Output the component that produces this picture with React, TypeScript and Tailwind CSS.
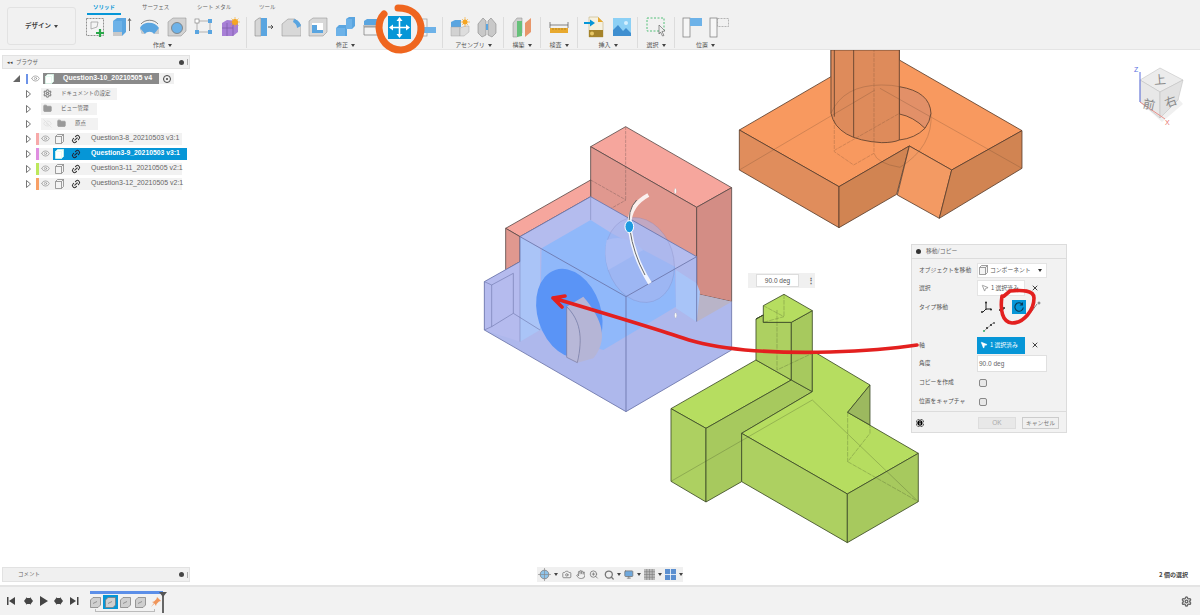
import { Hand, Search, ZoomIn, Monitor, Camera, Settings, Eye, EyeOff, Link2, Folder, MousePointer2, X, Info } from 'lucide-react';
import type { ReactNode } from 'react';

const Caret = () => <span className="ml-[3px] inline-block border-x-[2px] border-t-[3px] border-x-transparent border-t-[#444] align-middle" />;

function Sep({ className }: { className: string }) {
  return <div className={`mt-[2px] h-[31px] w-px bg-[#dcdcdc] ${className}`} />;
}

function Group({ label, gap, children }: { label: string; gap: string; children: ReactNode }) {
  return (
    <div className="flex flex-col items-center">
      <div className={`flex h-[24px] items-center ${gap}`}>{children}</div>
      <div className="mt-[2px] whitespace-nowrap text-[6px] leading-[8px] text-[#555]">
        {label}
        <Caret />
      </div>
    </div>
  );
}

function Ico({ children, w = 20 }: { children: ReactNode; w?: number }) {
  return (
    <svg width={w} height="22" viewBox={`0 0 ${w} 22`} fill="none" className="shrink-0">
      {children}
    </svg>
  );
}

const tabs = [
  { t: 'ソリッド', w: 'w-[34px]', on: true },
  { t: 'サーフェス', w: 'w-[25px] ml-[21px]', on: false },
  { t: 'シート メタル', w: 'w-[34px] ml-[30px]', on: false },
  { t: 'ツール', w: 'w-[15px] ml-[28px]', on: false },
];

function Toolbar() {
  return (
    <div className="flex h-[50px] shrink-0 border-b border-[#e4e4e4] bg-[#f1f1f1] pl-[7px] pt-[4px]">
      <div className="mt-[3px] flex h-[38px] w-[69px] items-center justify-center rounded-[3px] border border-[#e2e2e2] text-[6.5px] font-bold text-[#444]">
        デザイン
        <Caret />
      </div>
      <div className="ml-[9px]">
        <div className="flex h-[11px] pl-[2px]">
          {tabs.map((t) => (
            <div key={t.t} className={`${t.w} h-[11px] whitespace-nowrap text-center text-[5.5px] leading-[6px] ${t.on ? 'border-b-[2px] border-[#0696d7] font-bold text-[#0696d7]' : 'text-[#666]'}`}>
              {t.t}
            </div>
          ))}
        </div>
        <div className="flex">
          <Group label="作成" gap="gap-[7px]">
            <Ico>
              <rect x="1.5" y="2.5" width="17" height="17" stroke="#666" strokeWidth=".7" strokeDasharray="2 1" fill="#f4f4f4" />
              <path d="M6 6h7l-1 5-6 2z" stroke="#888" strokeWidth=".6" />
              <path d="M15 13v8M11 17h8" stroke="#2aa84a" strokeWidth="2.200" />
            </Ico>
            <Ico>
              <path d="M1 5l4-3h9v14l-4 4H1z" fill="#5aa5e0" />
              <path d="M1 5h9v15H1z" fill="#6db2e8" />
              <path d="M1 16h9v4H1z" fill="#c9c9c9" />
              <path d="M17.500 3v12M16 5l1.500-2.500L19 5" stroke="#444" strokeWidth=".7" />
            </Ico>
            <Ico w={21}>
              <path d="M1 12c3-7 15-7 19 0l-2 6h-3c-2-3-7-3-9 0H3z" fill="#5aa5e0" />
              <path d="M15 18l5-6v6zM1 12l2 6h3z" fill="#ccc" />
              <path d="M2 8c4-5 13-5 17 0" stroke="#555" strokeWidth=".7" />
            </Ico>
            <Ico>
              <path d="M1 6l5-4h13v13l-5 5H1z" fill="#d2d2d2" stroke="#888" strokeWidth=".5" />
              <circle cx="10" cy="12" r="5.500" fill="#6db2e8" stroke="#777" strokeWidth=".8" />
            </Ico>
            <Ico w={19}>
              <path d="M4 5h11M4 16h11M3 7v7M16 7v7" stroke="#888" strokeWidth=".6" />
              <rect x="1" y="3" width="4" height="4" fill="#fff" stroke="#777" strokeWidth=".6" />
              <rect x="14" y="3" width="4" height="4" fill="#5aa5e0" />
              <rect x="1" y="14" width="4" height="4" fill="#5aa5e0" />
              <rect x="14" y="14" width="4" height="4" fill="#5aa5e0" />
            </Ico>
            <Ico>
              <path d="M2 7l5-3 11 1v11l-5 4H2z" fill="#a77fd6" />
              <path d="M2 12h11M7 7v13M13 7v13" stroke="#7d5aa8" strokeWidth=".7" />
              <circle cx="15" cy="6" r="3" fill="#f5a623" />
              <path d="M15 1v10M10 6h10M11.500 2.500l7 7M18.500 2.500l-7 7" stroke="#f5a623" strokeWidth=".6" />
            </Ico>
          </Group>
          <Sep className="ml-[6px] mr-[7px]" />
          <Group label="修正" gap="gap-[7px]">
            <Ico>
              <path d="M1 5l4-3h2v18H1z" fill="#d6d6d6" stroke="#777" strokeWidth=".5" />
              <path d="M7 2h6v18H7z" fill="#5aa5e0" />
              <path d="M14 11h5M17 9l2 2-2 2" stroke="#333" strokeWidth=".8" />
            </Ico>
            <Ico>
              <path d="M1 8l6-5h7l6 6v11H1z" fill="#d8d8d8" stroke="#888" strokeWidth=".5" />
              <path d="M13 3c4 1 6 3 7 7l-4 2c0-3-2-5-4-6z" fill="#5aa5e0" />
            </Ico>
            <Ico>
              <path d="M1 5l4-3h14v14l-4 4H1z" fill="#d8d8d8" stroke="#888" strokeWidth=".5" />
              <path d="M4 7h11v10H4z" fill="#fff" />
              <path d="M4 9h5v5h6v3H4z" fill="#5aa5e0" />
            </Ico>
            <Ico>
              <path d="M1 12l3-3h7V3l3-2h6v9l-3 3h-5v7H1z" fill="#5aa5e0" />
              <path d="M1 12h9v8H1zM11 3h6v10h-6z" fill="#6db2e8" />
            </Ico>
            <Ico>
              <path d="M2 5l3-2h14v4l-3 2H2z" fill="#5aa5e0" />
              <path d="M2 11h15v8H2z" fill="#f2f2f2" stroke="#777" strokeWidth=".7" />
              <path d="M1 10h18" stroke="#555" strokeWidth=".6" />
            </Ico>
            <svg width="23" height="23" viewBox="0 0 23 23" className="-mx-[1px] shrink-0">
              <rect width="23" height="23" fill="#0696d7" />
              <path d="M11.500 3v17M3 11.500h17" stroke="#fff" strokeWidth="1.600" />
              <path d="M11.500 1l3 4h-6zM11.500 22l3-4h-6zM1 11.500l4-3v6zM22 11.500l-4-3v6z" fill="#fff" />
            </svg>
            <Ico>
              <rect x="1" y="3" width="9" height="17" fill="none" stroke="#999" strokeWidth=".7" />
              <rect x="3" y="11" width="16" height="6" fill="#6db2e8" />
            </Ico>
          </Group>
          <Sep className="ml-[5px] mr-[7px]" />
          <Group label="アセンブリ" gap="gap-[7px]">
            <Ico>
              <path d="M1 6l4-2h6v7H1z" fill="#5aa5e0" />
              <path d="M1 11h9v9H1z" fill="#d2d2d2" stroke="#999" strokeWidth=".4" />
              <path d="M10 12l5-2h4v6l-5 4h-4z" fill="#ddd" stroke="#999" strokeWidth=".4" />
              <circle cx="15" cy="6" r="2.500" fill="#f5a623" />
              <path d="M15 1v10M10 6h10M12 3l6 6M18 3l-6 6" stroke="#f5a623" strokeWidth=".6" />
            </Ico>
            <Ico>
              <path d="M1 8l5-6 3 3v14l-4 2-4-4z" fill="#c9c9c9" stroke="#777" strokeWidth=".5" />
              <path d="M19 8l-5-6-3 3v14l4 2 4-4z" fill="#c9c9c9" stroke="#777" strokeWidth=".5" />
              <path d="M9 8l2 0v6H9z" fill="#5aa5e0" />
            </Ico>
          </Group>
          <Sep className="ml-[6px] mr-[8px]" />
          <Group label="構築" gap="gap-0">
            <Ico>
              <path d="M1 7l4-5h5v15l-5 4H1z" fill="#d0d0d0" stroke="#888" strokeWidth=".5" />
              <path d="M5 5h5v15l-5 1z" fill="#66c07a" />
              <path d="M13 7l6-5v14l-6 5z" fill="#e8966a" />
            </Ico>
          </Group>
          <Sep className="ml-[8px] mr-[8px]" />
          <Group label="検査" gap="gap-0">
            <Ico>
              <path d="M1 6v6M19 6v6M1 9h18" stroke="#555" strokeWidth=".7" />
              <rect x="1" y="12" width="18" height="5" fill="#e8a92e" />
              <path d="M4 12v2M7 12v2M10 12v2M13 12v2M16 12v2" stroke="#8a6410" strokeWidth=".5" />
            </Ico>
          </Group>
          <Sep className="ml-[8px] mr-[6px]" />
          <Group label="挿入" gap="gap-[8px]">
            <Ico>
              <path d="M5 1h9l5 5v15H5z" fill="#f6f1e0" stroke="#b9a66a" strokeWidth=".5" />
              <path d="M14 1l5 5h-5z" fill="#e8a92e" />
              <rect x="5" y="14" width="14" height="7" fill="#a5832a" />
              <circle cx="8" cy="17.500" r="2" fill="#e8c766" />
              <path d="M0 7h7" stroke="#0696d7" strokeWidth="2" />
              <path d="M6 3.500l5 3.500-5 3.500z" fill="#0696d7" />
            </Ico>
            <Ico>
              <rect x="1" y="2" width="18" height="18" fill="#8cd0f5" />
              <circle cx="14" cy="7" r="2" fill="#d5f0ff" />
              <path d="M1 20v-6l5-5 5 6 3-3 5 5v3z" fill="#3f8fd0" />
            </Ico>
          </Group>
          <Sep className="ml-[5px] mr-[8px]" />
          <Group label="選択" gap="gap-0">
            <Ico>
              <rect x="1" y="2" width="17" height="13" stroke="#55c07a" strokeWidth="1" strokeDasharray="2 1.500" />
              <path d="M13 9l6 6-3 .5 2 4-1.500.5-2-4-1.500 2z" fill="#eee" stroke="#555" strokeWidth=".6" />
            </Ico>
          </Group>
          <Sep className="ml-[8px] mr-[7px]" />
          <Group label="位置" gap="gap-[7px]">
            <Ico>
              <rect x="1" y="2" width="7" height="19" fill="#f6f6f6" stroke="#777" strokeWidth=".7" />
              <rect x="8" y="2" width="12" height="8" fill="#6db2e8" />
            </Ico>
            <Ico>
              <rect x="1" y="2" width="7" height="19" fill="#f6f6f6" stroke="#777" strokeWidth=".7" />
              <rect x="8.500" y="2.500" width="11" height="8" stroke="#999" strokeWidth=".7" strokeDasharray="2 1" />
            </Ico>
          </Group>
        </div>
      </div>
    </div>
  );
}

function Scene() {
  const blueLine = '#6a74a8';
  return (
    <svg className="absolute inset-0" width="1200" height="535" viewBox="0 50 1200 535" fill="none">
      {/* orange part */}
      <g transform="translate(730 50) scale(.3333)" stroke="#5b3f2c" strokeWidth="2.500" strokeLinejoin="round">
        <polygon points="28,240 303,80 303,0 508,0 508,30 876,242 665,360 538,288 327,410" fill="#f8995f" />
        <polygon points="28,240 327,410 327,533 28,360" fill="#e08d5c" />
        <polygon points="327,410 538,288 500,433 327,533" fill="#d18452" />
        <polygon points="538,288 665,360 628,505 502,435" fill="#f39a63" />
        <polygon points="665,360 876,242 876,355 628,505" fill="#d18452" />
        <path d="M508,110 Q600,125 603,190 Q600,215 585,235 Q550,200 508,192Z" fill="#e29068" />
        <path d="M303,0 L303,190 Q320,270 455,278 Q490,278 508,270 L508,0Z" fill="#de8b5b" />
        <path d="M371,0V262M313,0V200M508,270Q555,265 585,235" />
        <g opacity=".35" strokeWidth="2">
          <path d="M28,360 L435,120 M450,115 L876,355 M303,190 Q340,105 455,105 Q490,105 508,110" />
          <path d="M313,210V305L371,345L432,310V0M505,192L315,300" strokeDasharray="12 3" />
          <path d="M603,190 Q610,290 510,352 Q440,340 432,310" />
        </g>
      </g>
      {/* red + blue part */}
      <g transform="translate(470 120) scale(.3333)" strokeLinejoin="round">
        <g stroke="#5c4a48" strokeWidth="2.500">
          <polygon points="362,80 467,20 785,203 680,262" fill="#f6a69d" />
          <polygon points="362,80 680,262 680,522 362,340" fill="#e0988f" />
          <polygon points="680,262 785,203 785,545 680,522" fill="#d38d85" />
          <polygon points="107,325 362,180 362,230 150,350" fill="#f6a69d" />
          <polygon points="107,325 150,350 150,425 107,450" fill="#e0988f" />
          <path d="M467,20V240M362,180L468,240L362,300" opacity=".4" strokeDasharray="10 3" />
        </g>
        <polygon points="43,485 150,425 150,350 362,230 680,410 680,522 785,545 785,690 468,875 43,630" fill="#aeb8ec" />
        <polygon points="150,350 362,230 680,410 468,530" fill="#b4bcee" />
        <polygon points="43,485 150,425 150,665 43,630" fill="#b5bbee" />
        <polygon points="680,522 785,545 680,605" fill="#b9b4c8" />
        <polygon points="150,350 210,385 210,630 150,665" fill="#aac4f7" />
        <polygon points="215,385 362,300 425,340 520,390 615,440 618,560 400,690 210,630" fill="#90b8fa" />
        <polygon points="618,450 680,490 690,515 680,605 618,565" fill="#a8c4f8" />
        <ellipse cx="510" cy="420" rx="100" ry="130" transform="rotate(-18 510 420)" fill="#a8b4ec" fillOpacity=".55" stroke="#7a7ab0" strokeOpacity=".35" strokeWidth="2" />
        <path d="M410,360 Q400,410 415,450 L520,390 Q470,340 410,360Z" fill="#aabcf4" />
        <ellipse cx="298" cy="580" rx="95" ry="137" transform="rotate(-18 298 580)" fill="#5a94f6" />
        <path d="M340,530 C400,600 415,660 370,715 L322,728 C340,650 330,600 290,560Z" fill="#b5b5d6" />
        <path d="M290,560 C330,600 340,650 322,728 L290,712Z" fill="#b8b8d8" stroke="#77779a" strokeWidth="2" />
        <g stroke={blueLine} strokeWidth="2.500">
          <path d="M43,485V630L468,875L785,690V545M468,530V875M150,350L468,530L680,410V605M150,350V425L43,485M150,350L362,230L680,410" />
          <path d="M65,495L130,460V580L65,620ZM43,485L65,495M43,630L65,620M130,580L210,630" opacity=".7" />
          <path d="M150,425V665M362,230V300" opacity=".5" />
        </g>
        <path d="M535,225 Q470,260 480,330 Q490,410 540,490" stroke="#fff" strokeWidth="12" opacity=".85" />
        <path d="M500,240 Q470,270 480,330 Q490,400 525,465" stroke="#666" strokeWidth="3" />
        <ellipse cx="478" cy="320" rx="13" ry="18" fill="#1e9be0" stroke="#fff" strokeWidth="3" />
        <ellipse cx="616" cy="213" rx="3" ry="8" fill="#fff" stroke="#aaa" />
        <ellipse cx="617" cy="586" rx="3" ry="8" fill="#fff" stroke="#aaa" />
      </g>
      {/* green part */}
      <g transform="translate(660 290) scale(.3333)" stroke="#3c4a26" strokeWidth="2.500" strokeLinejoin="round">
        <polygon points="33,356 288,210 394,270 138,415" fill="#b6dd60" />
        <polygon points="33,356 138,415 138,636 33,574" fill="#add061" />
        <polygon points="138,415 394,270 457,305 245,430 245,575 138,636" fill="#a7c95e" />
        <polygon points="288,87 310,75 310,97 394,97 394,270 288,210" fill="#add061" />
        <polygon points="394,97 457,62 457,305 394,270" fill="#a7c95e" />
        <polygon points="310,47 372,13 457,62 394,97 310,97 310,75 288,87 310,75" fill="#b6dd60" />
        <polygon points="245,430 457,305 457,190 470,190 630,285 563,367 775,490 562,612" fill="#b6dd60" />
        <polygon points="563,367 630,285 630,405" fill="#9cb95f" />
        <polygon points="245,430 562,612 562,758 245,575" fill="#add061" />
        <polygon points="562,612 775,490 775,635 562,758" fill="#a7c95e" />
        <g opacity=".4" strokeWidth="2">
          <path d="M33,574L457,330L775,635" />
          <path d="M351,60V240L457,190M563,367V515L630,430V405M563,515L775,635M372,13V80M310,47L372,80L310,97" strokeDasharray="14 3" />
        </g>
      </g>
      {/* view cube */}
      <polygon points="1143,105 1162,122 1183,104 1175,95" fill="#e6e6e6" opacity=".6" />
      <polygon points="1160,68 1183,80 1160,92 1140,80" fill="#ececec" stroke="#bbb" strokeWidth=".5" />
      <polygon points="1140,80 1160,92 1160,118 1140,102" fill="#e8e8e8" stroke="#bbb" strokeWidth=".5" />
      <polygon points="1160,92 1183,80 1178,100 1160,118" fill="#e2e2e2" stroke="#bbb" strokeWidth=".5" />
      <path d="M1140,72V102" stroke="#5a6fe0" strokeWidth="1" />
      <path d="M1140,102L1165,119" stroke="#e8908a" strokeWidth="1" />
      <text x="1134" y="72" fontSize="7" fill="#5a6fe0" fontFamily="Liberation Sans">Z</text>
      <text x="1165" y="125" fontSize="7" fill="#e8706a" fontFamily="Liberation Sans">X</text>
      <text x="1154" y="84" fontSize="12" fill="#888" transform="rotate(-5 1160 80)">上</text>
      <text x="1144" y="109" fontSize="12" fill="#888" transform="rotate(12 1150 100)">前</text>
      <text x="1164" y="106" fontSize="12" fill="#888" transform="rotate(-20 1170 100)">右</text>
    </svg>
  );
}

function BoxIco({ light }: { light?: boolean }) {
  return (
    <svg width="9" height="10" viewBox="0 0 9 10" fill={light ? '#fff' : '#f4f4f4'} stroke={light ? '#dfe' : '#777'} strokeWidth=".7" className="shrink-0">
      <path d="M.5 2.500l2-2h6v7l-2 2h-6z" />
      <path d="M.5 2.500h6v7M6.500 2.500l2-2" />
    </svg>
  );
}

const Tri = () => (
  <svg width="5" height="8" viewBox="0 0 5 8" fill="#fff" stroke="#555" strokeWidth=".8" className="mr-[5px] shrink-0">
    <path d="M.5.5l4 3.500-4 3.500z" />
  </svg>
);

const comps = [
  { bar: 'bg-[#f7a9a9]', t: 'Question3-8_20210503 v3:1' },
  { bar: 'bg-[#df8ee0]', t: 'Question3-9_20210503 v3:1', sel: true },
  { bar: 'bg-[#bde85c]', t: 'Question3-11_20210505 v2:1' },
  { bar: 'bg-[#f8a066]', t: 'Question3-12_20210505 v2:1' },
];

function Browser() {
  return (
    <div className="absolute bottom-[3px] left-[2px] top-[5px] flex w-[188px] flex-col justify-between">
      <div>
        <div className="flex h-[14px] items-center border border-[#e2e2e2] bg-[#f0f0f0] pl-[4px] pr-[1px] text-[5.5px] text-[#666]">
          <span className="mr-[3px] text-[5px] text-[#444]">◂◂</span>
          ブラウザ
          <span className="ml-auto h-[5px] w-[5px] rounded-full bg-[#444]" />
          <span className="ml-[3px] h-[6px] w-px bg-[#aaa]" />
        </div>
        <div className="mt-[2px] flex flex-col font-['Liberation_Sans',sans-serif] text-[7px] text-[#666]">
          <div className="flex h-[15px] items-center pl-[11px]">
            <span className="mr-[6px] h-0 w-0 border-b-[7px] border-l-[7px] border-b-[#666] border-l-transparent" />
            <span className="mr-[3px] h-[10px] w-[2px] bg-[#6d93e8]" />
            <Eye className="mr-[3px] h-[9px] w-[9px] text-[#999]" />
            <div className="flex h-[11px] w-[116px] items-center bg-[#8a8a8a] pl-[2px] font-bold text-white">
              <BoxIco light />
              <span className="ml-[9px] whitespace-nowrap">Question3-10_20210505 v4</span>
            </div>
            <div className="flex h-[11px] w-[15px] items-center justify-center bg-[#f0f0f0]">
              <span className="flex h-[8px] w-[8px] items-center justify-center rounded-full border border-[#444]">
                <span className="h-[2px] w-[2px] rounded-full bg-[#444]" />
              </span>
            </div>
          </div>
          <div className="flex h-[15px] items-center pl-[24px]">
            <Tri />
            <div className="ml-[5px] flex h-[12px] w-[76px] items-center bg-[#f2f2f2] pl-[2px] font-['Noto_Sans_CJK_JP',sans-serif] text-[5.5px]">
              <Settings className="mr-[9px] h-[9px] w-[9px] text-[#888]" strokeWidth={3} />
              ドキュメントの設定
            </div>
          </div>
          <div className="flex h-[15px] items-center pl-[24px]">
            <Tri />
            <div className="ml-[5px] flex h-[12px] w-[56px] items-center bg-[#f2f2f2] pl-[2px] font-['Noto_Sans_CJK_JP',sans-serif] text-[5.5px]">
              <Folder className="mr-[9px] h-[9px] w-[9px] fill-[#999] text-[#999]" />
              ビュー管理
            </div>
          </div>
          <div className="flex h-[15px] items-center pl-[24px]">
            <Tri />
            <div className="ml-[5px] flex h-[12px] w-[57px] items-center bg-[#f2f2f2] pl-[2px] font-['Noto_Sans_CJK_JP',sans-serif] text-[5.5px]">
              <EyeOff className="mr-[5px] h-[9px] w-[9px] text-[#ddd]" />
              <Folder className="mr-[9px] h-[9px] w-[9px] fill-[#999] text-[#999]" />
              原点
            </div>
          </div>
          {comps.map((c) => (
            <div key={c.t} className="flex h-[15px] items-center pl-[24px]">
              <Tri />
              <span className={`h-[12px] w-[3px] ${c.bar}`} />
              <div className="flex h-[12px] w-[143px] items-center bg-[#f2f2f2] pl-[2px]">
                <Eye className="h-[9px] w-[9px] shrink-0 text-[#999]" />
                <div className={`ml-[3px] flex h-[12px] shrink-0 items-center pl-[2px] ${c.sel ? 'w-[134px] bg-[#0696d7] text-[6.8px] font-bold text-white' : ''}`}>
                  <BoxIco light={c.sel} />
                  <Link2 className={`ml-[7px] mr-[10px] h-[10px] w-[10px] shrink-0 -rotate-45 ${c.sel ? 'text-[#223]' : 'text-[#333]'}`} strokeWidth={2.500} />
                  <span className="whitespace-nowrap">{c.t}</span>
                </div>
              </div>
            </div>
          ))}
        </div>
      </div>
      <div className="flex h-[15px] items-center border border-[#e2e2e2] bg-[#f0f0f0] pl-[15px] pr-[1px] text-[5.5px] text-[#666]">
        コメント
        <span className="ml-auto h-[5px] w-[5px] rounded-full bg-[#444]" />
        <span className="ml-[3px] h-[6px] w-px bg-[#aaa]" />
      </div>
    </div>
  );
}

function Row({ label, h, children }: { label: string; h: string; children: ReactNode }) {
  return (
    <div className={`flex items-center ${h}`}>
      <div className="w-[58px] shrink-0 whitespace-nowrap text-[5.8px] text-[#555]">{label}</div>
      {children}
    </div>
  );
}

function Dialog() {
  return (
    <div className="absolute left-[911px] top-[194px] flex h-[189px] w-[156px] flex-col border border-[#dcdcdc] bg-[#f2f2f2]">
      <div className="flex h-[14px] shrink-0 items-center border-b border-[#dcdcdc] pl-[4px] text-[5.8px] text-[#666]">
        <span className="mr-[5px] h-[5px] w-[5px] rounded-full bg-[#333]" />
        移動/コピー
      </div>
      <div className="flex-1 pl-[7px] pt-[2px]">
        <Row label="オブジェクトを移動" h="h-[18px]">
          <div className="flex h-[15px] w-[70px] items-center border border-[#e4e4e4] bg-white pl-[1px] text-[5.8px] text-[#555]">
            <BoxIco />
            <span className="ml-[2px]">コンポーネント</span>
            <span className="ml-auto mr-[4px] border-x-[2px] border-t-[3px] border-x-transparent border-t-[#333]" />
          </div>
        </Row>
        <Row label="選択" h="h-[18px]">
          <div className="flex h-[16px] w-[48px] items-center border border-[#e4e4e4] bg-white pl-[3px] text-[5.8px] text-[#555]">
            <MousePointer2 className="mr-[2px] h-[8px] w-[8px] text-[#777]" />1 選択済み
          </div>
          <X className="ml-[6px] h-[8px] w-[8px] text-[#444]" strokeWidth={3} />
        </Row>
        <Row label="タイプ移動" h="h-[20px]">
          <svg width="68" height="14" viewBox="0 0 68 14" fill="none" className="shrink-0">
            <path d="M9 3v7M9 9l-3 3M9 9h5" stroke="#222" />
            <circle cx="9" cy="2.500" r="1" fill="#222" /><circle cx="5" cy="12" r="1" fill="#222" /><circle cx="14" cy="9.500" r="1" fill="#222" />
            <circle cx="23" cy="10" r="1" fill="#222" /><path d="M24 9h3" stroke="#222" /><circle cx="27" cy="8" r="1" fill="#222" />
            <rect x="35" y="0" width="14" height="14" fill="#0696d7" />
            <path d="M45.500 4.500a4.200 4.200 0 1 0 .8 3" stroke="#0b3a55" strokeWidth="1.100" />
            <path d="M46 2v3.500h-3.500z" fill="#0b3a55" />
            <path d="M55 11l5-7" stroke="#555" strokeWidth=".7" /><circle cx="62" cy="3" r="1" fill="none" stroke="#333" strokeWidth=".6" />
          </svg>
        </Row>
        <div className="flex h-[19px] items-center pl-[63px]">
          <svg width="14" height="12" viewBox="0 0 14 12" fill="none">
            <path d="M2 10l9-8" stroke="#777" strokeWidth=".7" />
            <circle cx="5" cy="7" r="1" fill="#222" /><circle cx="9" cy="4" r="1" fill="#222" /><circle cx="2" cy="10" r="1" fill="#3a6" /><circle cx="12" cy="2" r="1" fill="#555" />
          </svg>
        </div>
        <Row label="軸" h="h-[18px]">
          <div className="flex h-[17px] w-[48px] items-center bg-[#0696d7] pl-[3px] text-[5.8px] text-white">
            <MousePointer2 className="mr-[2px] h-[8px] w-[8px] fill-white" />1 選択済み
          </div>
          <X className="ml-[6px] h-[8px] w-[8px] text-[#444]" strokeWidth={3} />
        </Row>
        <Row label="角度" h="h-[19px]">
          <div className="flex h-[17px] w-[70px] items-center border border-[#e0e0e0] bg-white pl-[1px] font-['Liberation_Sans',sans-serif] text-[6.5px] text-[#666]">90.0 deg</div>
        </Row>
        <Row label="コピーを作成" h="h-[19px]">
          <span className="ml-[2px] h-[8px] w-[8px] rounded-[2px] border border-[#888] bg-[#e8e8e8]" />
        </Row>
        <Row label="位置をキャプチャ" h="h-[19px]">
          <span className="ml-[2px] h-[8px] w-[8px] rounded-[2px] border border-[#888] bg-[#e8e8e8]" />
        </Row>
      </div>
      <div className="flex h-[23px] shrink-0 items-center border-t border-[#dcdcdc] pl-[4px]">
        <Info className="h-[8px] w-[8px] rounded-full bg-black text-white" strokeWidth={3} />
        <div className="ml-[54px] flex h-[12px] w-[38px] items-center justify-center border border-[#ddd] bg-[#e8e8e8] font-['Liberation_Sans',sans-serif] text-[6.5px] text-[#aaa]">OK</div>
        <div className="ml-[6px] flex h-[12px] w-[37px] items-center justify-center border border-[#ccc] bg-[#f0f0f0] text-[5.8px] text-[#777]">キャンセル</div>
      </div>
    </div>
  );
}

function NavBar() {
  return (
    <div className="absolute bottom-[3px] left-[537px] flex h-[15px] w-[146px] items-center bg-[#f0f0f0] pl-[1px] text-[#777]">
      <svg width="13" height="13" viewBox="0 0 12 12" fill="none" className="shrink-0">
        <circle cx="6" cy="6" r="4" fill="#8fc4ea" stroke="#777" strokeWidth=".7" />
        <path d="M6 0v12M0 6h12" stroke="#888" strokeWidth=".6" />
      </svg>
      <Caret />
      <Camera className="ml-[4px] h-[11px] w-[11px]" />
      <Hand className="ml-[4px] h-[11px] w-[11px]" />
      <ZoomIn className="ml-[4px] h-[11px] w-[11px]" />
      <Search className="ml-[5px] h-[12px] w-[12px]" strokeWidth={3} />
      <Caret />
      <Monitor className="ml-[3px] h-[11px] w-[11px] fill-[#6fa8dc]" />
      <Caret />
      <svg width="11" height="11" viewBox="0 0 10 10" className="ml-[3px] shrink-0">
        <rect width="10" height="10" fill="#bbb" />
        <path d="M2.500 0v10M5 0v10M7.500 0v10M0 2.500h10M0 5h10M0 7.500h10" stroke="#777" strokeWidth=".5" />
      </svg>
      <Caret />
      <svg width="11" height="11" viewBox="0 0 10 10" className="ml-[3px] shrink-0">
        <rect width="10" height="10" fill="#5b8fd0" />
        <path d="M5 0v10M0 5h10" stroke="#fff" strokeWidth=".7" />
      </svg>
      <Caret />
    </div>
  );
}

function TimelineBox({ sel }: { sel?: boolean }) {
  return (
    <div className={`flex h-[14px] w-[15px] items-center justify-center ${sel ? 'bg-[#0696d7]' : ''}`}>
      <svg width="11" height="11" viewBox="0 0 11 11" fill="#cfcfcf" stroke="#777" strokeWidth=".7">
        <path d="M.5 3l2.500-2.500h7.500v7.500L8 10.500H.5z" />
        <path d="M3 6.500l4-2" />
      </svg>
    </div>
  );
}

function Timeline() {
  return (
    <div className="flex h-[30px] shrink-0 items-center border-t-[2px] border-[#e4e4e4] bg-[#f2f2f2] pl-[7px] pr-[8px]">
      <svg width="72" height="10" viewBox="0 0 72 10" fill="#444" className="shrink-0">
        <path d="M0 1h1.500v8H0zM8 1v8L2 5zM17 5l3-4v8zM20 2h3v6h-3zM23 1l3 4-3 4zM33 0l8 5-8 5zM47 5l3-4v8zM50 2h3v6h-3zM53 1l3 4-3 4zM63 1l6 4-6 4zM70 1h1.500v8H70z" />
      </svg>
      <div className="relative ml-[9px] h-[26px] w-[80px]">
        <div className="ml-[2px] mt-[3px] h-[3px] w-[73px] bg-[#5c8fe8]" />
        <div className="mt-[1px] flex items-center">
          <TimelineBox />
          <TimelineBox sel />
          <TimelineBox />
          <TimelineBox />
          <svg width="10" height="10" viewBox="0 0 10 10" fill="#f0955a" className="ml-[3px]">
            <path d="M6 0l4 4-2 .5L5.500 7 5 9 3.500 6.500 0 10l3-4L1 5l2-.5L5.500 2z" />
          </svg>
        </div>
        <div className="ml-[7px] h-[3px] w-[60px] border-x border-b border-[#bbb]" />
        <div className="absolute left-[74px] top-[5px] h-[20px] w-[2px] bg-[#666]" />
        <div className="absolute left-[71px] top-[4px] border-x-[4px] border-t-[5px] border-x-transparent border-t-[#555]" />
      </div>
      <Settings className="ml-auto h-[11px] w-[11px] text-[#666]" strokeWidth={3} />
    </div>
  );
}

export default function App() {
  return (
    <div className="relative flex h-[615px] w-[1200px] flex-col overflow-hidden bg-white font-['Noto_Sans_CJK_JP','Liberation_Sans',sans-serif]">
      <Toolbar />
      <div className="relative flex-1 bg-white">
        <Scene />
        <Browser />
        <div className="absolute left-[748px] top-[223px] flex h-[15px] w-[67px] items-center bg-[#f0f0f0] pl-[8px] font-['Liberation_Sans',sans-serif] text-[6.5px] text-[#555]">
          <div className="flex h-[13px] w-[44px] items-center justify-center border border-[#ddd] bg-white">90.0 deg</div>
          <div className="ml-[8px] text-[8px] font-bold leading-none text-[#666]">⋮</div>
        </div>
        <Dialog />
        <NavBar />
        <div className="absolute bottom-[6px] right-[12px] text-[6px] font-bold text-[#444]">2 個の選択</div>
      </div>
      <Timeline />
      {/* hand drawn annotations on top of the screenshot */}
      <svg className="pointer-events-none absolute inset-0" width="1200" height="615" viewBox="0 0 1200 615" fill="none">
        <path d="M398,8 C410,8 419,14 421,26 C422,38 414,49 401,50 C388,50 380,40 379,28 C379,22 381,17 384,14" stroke="#ef661f" strokeWidth="7" strokeLinecap="round" />
        <path d="M1002,296 C1000,310 1002,322 1012,323 C1024,323 1034,310 1034,298 C1034,290 1022,290 1010,291 L1004,296" stroke="#e3201f" strokeWidth="3.600" strokeLinecap="round" />
        <path d="M917,345 C890,349 860,351 830,352 C800,353 770,352 745,350 C725,348 700,344 683,338 C650,327 600,312 553,298 M553,298 L562,307 M553,298 L565,296" stroke="#e3201f" strokeWidth="3.600" strokeLinecap="round" />
      </svg>
    </div>
  );
}
